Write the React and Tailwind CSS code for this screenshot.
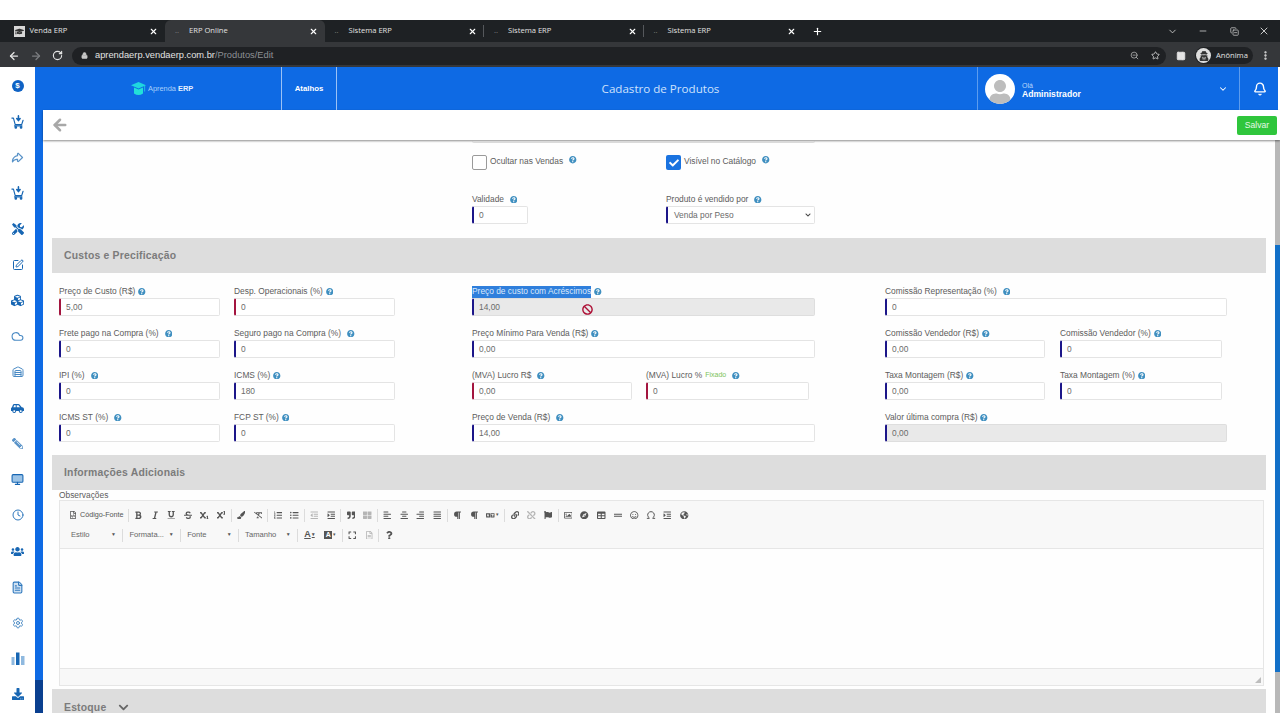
import React from "react"
import {
  ArrowLeft, ArrowRight, RotateCw, Lock, ZoomOut, Star, X, Plus, ChevronDown, Minus, EllipsisVertical,
  Cloud, Warehouse, Monitor, Clock, FileText, Settings, SquarePen, Bell, PanelRight, CopyMinus, Omega,
} from "lucide-react"
import {
  FaTools, FaCubes, FaCarSide, FaPencilAlt, FaUsers, FaDownload,
  FaGraduationCap, FaUserSecret, FaCheck, FaBan, FaUser, FaQuestionCircle, FaChevronDown,
  FaBold, FaItalic, FaUnderline, FaStrikethrough, FaSubscript, FaSuperscript, FaPaintBrush, FaRemoveFormat,
  FaListOl, FaListUl, FaOutdent, FaIndent, FaQuoteRight, FaAlignLeft, FaAlignCenter, FaAlignRight,
  FaAlignJustify, FaParagraph, FaLanguage, FaLink, FaUnlink, FaFlag, FaRegImage, FaCompass, FaTable,
  FaGripLines, FaRegSmile, FaGlobeAmericas, FaExpand, FaRegFileCode, FaRegFileAlt, FaQuestion, FaThLarge,
} from "react-icons/fa"
import { TiArrowForwardOutline } from "react-icons/ti"

const tabs = [
  { title: "Venda ERP", favicon: true },
  { title: "ERP Online", active: true },
  { title: "Sistema ERP", divider: true },
  { title: "Sistema ERP", divider: true },
  { title: "Sistema ERP" },
]

function CartIcon() {
  return (
    <svg width="14" height="14" viewBox="0 0 16 16" fill="none" stroke="currentColor" strokeWidth="1.3" strokeLinecap="round" strokeLinejoin="round">
      <path d="M1 3.5h1.8l2 7.5h7.4l1.6-5" />
      <path d="M4 12.5h8.5" />
      <circle cx="5.5" cy="14.2" r="0.9" fill="currentColor" />
      <circle cx="11.5" cy="14.2" r="0.9" fill="currentColor" />
      <path d="M8.5 1v4.5M6.6 4l1.9 2.4L10.4 4" strokeWidth="1.8" />
    </svg>
  )
}

function BarsIcon() {
  return (
    <svg width="14" height="13" viewBox="0 0 14 13">
      <rect x="0.5" y="5" width="3" height="8" fill="#8fb9df" />
      <rect x="5" y="0.5" width="3.5" height="12.5" fill="#1766b3" />
      <rect x="10" y="4" width="3.5" height="9" fill="#8fb9df" />
    </svg>
  )
}

function LogoIcon() {
  return (
    <svg width="15" height="15" viewBox="0 0 15 15">
      <path d="M7.5 1 15 4.2 7.5 7.5 0 4.2Z" fill="#1fd6df" />
      <path d="M3 6.5 7.5 8.5 12 6.5V12.5Q7.5 15.5 3 12.5Z" fill="#22e0d8" />
      <rect x="13.3" y="4.5" width="0.8" height="6" fill="#1fd6df" />
    </svg>
  )
}

const sideIcons = [
  <span key="s" className="flex h-[12px] w-[12px] items-center justify-center rounded-full bg-[#0f62c4] text-[8px] font-bold text-white">$</span>,
  <CartIcon key="a" />,
  <TiArrowForwardOutline key="b" size={15} className="text-[#5a93c8]" />,
  <CartIcon key="c" />,
  <FaTools key="d" size={12} />,
  <SquarePen key="e" size={12} />,
  <FaCubes key="f" size={13} />,
  <Cloud key="g" size={13} className="text-[#4a8ac4]" />,
  <Warehouse key="h" size={12} className="text-[#4a8ac4]" />,
  <FaCarSide key="i" size={13} />,
  <FaPencilAlt key="j" size={11} className="-scale-x-100 text-[#5a93c8]" />,
  <Monitor key="k" size={13} fill="#9cc3e6" />,
  <Clock key="l" size={12} className="text-[#2f78bd]" />,
  <FaUsers key="m" size={13} />,
  <FileText key="n" size={13} fill="#cfe1f2" className="text-[#2f78bd]" />,
  <Settings key="o" size={12} className="text-[#4a8ac4]" />,
  <BarsIcon key="p" />,
  <FaDownload key="q" size={12} />,
]

function Help({ wide }) {
  return <FaQuestionCircle size={7.5} className={`shrink-0 text-[#3f8fc0] ${wide ? "ml-[6px]" : "ml-[3px]"}`} />
}

function Field({ label, value, wide, tone = "blue", disabled, width = "w-full", note, selected }) {
  return (
    <div className={`flex flex-col ${width}`}>
      <div className="flex h-[14px] items-center pt-px text-[8.4px] text-[#5c5c5c]">
        <span className={selected ? "flex h-[12px] items-center bg-[#2f7fdc] text-[#dbe9fb]" : ""}>{label}</span>
        {note && <span className="ml-[3px] text-[7px] text-[#7cc35a]">{note}</span>}
        <Help wide={wide} />
      </div>
      <div
        className={`flex h-[18px] items-center rounded-[2px] border border-l-2 pl-[5px] text-[8.4px] text-[#6b6b6b] ${
          tone === "red" ? "border-l-[#a3153f]" : "border-l-[#1c1689]"
        } ${disabled ? "border-y-[#dedede] border-r-[#dedede] bg-[#e9e9e9]" : "border-y-[#e4e4e4] border-r-[#e4e4e4] bg-white"}`}
      >
        {value}
      </div>
    </div>
  )
}

function SectionBar({ title, height = "h-[35px]", children }) {
  return (
    <div className={`flex shrink-0 items-center bg-[#dddddd] pl-[12px] text-[10.4px] font-bold tracking-[0.2px] text-[#7b7b7b] ${height}`}>
      {title}
      {children}
    </div>
  )
}

const row1 = [
  { k: "sep" },
  ...[FaBold, FaItalic, FaUnderline, FaStrikethrough, FaSubscript, FaSuperscript].map((I) => ({ I })),
  { k: "sep" },
  ...[FaPaintBrush, FaRemoveFormat].map((I) => ({ I })),
  { k: "sep" },
  ...[FaListOl, FaListUl].map((I) => ({ I })),
  { k: "sep" },
  { I: FaOutdent, faint: true },
  { I: FaIndent },
  { k: "sep" },
  { I: FaQuoteRight },
  { I: FaThLarge, faint: true },
  { k: "sep" },
  ...[FaAlignLeft, FaAlignCenter, FaAlignRight, FaAlignJustify].map((I) => ({ I })),
  { k: "sep" },
  { I: FaParagraph },
  { I: FaParagraph },
  { I: FaLanguage, caret: true },
  { k: "sep" },
  { I: FaLink },
  { I: FaUnlink, faint: true },
  { I: FaFlag },
  { k: "sep" },
  ...[FaRegImage, FaCompass, FaTable, FaGripLines, FaRegSmile].map((I) => ({ I })),
  { L: Omega },
  { I: FaIndent },
  { I: FaGlobeAmericas },
]

function ToolIcon({ I, L, faint, caret }) {
  return (
    <span className={`flex h-[16px] items-center justify-center ${caret ? "w-[21.2px]" : "w-[16.6px]"} ${faint ? "text-[#b5b5b5]" : "text-[#555]"}`}>
      {I && <I size={8.5} />}
      {L && <L size={10} strokeWidth={2.4} />}
      {caret && <span className="ml-px text-[5px]">▾</span>}
    </span>
  )
}

function Sep() {
  return <span className="mx-[1.2px] h-[13px] w-px bg-[#dcdcdc]" />
}

function Combo({ label, width }) {
  return (
    <div className={`flex items-center justify-between pr-[5px] pl-[5px] text-[7.6px] text-[#666] ${width}`}>
      {label}
      <span className="text-[5px] text-[#555]">▼</span>
    </div>
  )
}

function Editor() {
  return (
    <div className="mr-[2px] ml-[7px] flex h-[186px] shrink-0 flex-col border border-[#e6e6e6]">
      <div className="flex h-[48px] shrink-0 flex-col border-b border-[#e6e6e6] bg-[#f8f8f8] pt-[6px]">
        <div className="flex h-[16px] items-center pl-[9px]">
          <span className="flex w-[57.6px] items-center text-[7.2px] text-[#555]">
            <FaRegFileCode size={8} className="mr-[3px] text-[#555]" />
            Código-Fonte
          </span>
          {row1.map((item, i) => (item.k ? <Sep key={i} /> : <ToolIcon key={i} {...item} />))}
        </div>
        <div className="mt-[4px] flex h-[16px] items-center pl-[6px]">
          <Combo label="Estilo" width="w-[55px]" />
          <Sep />
          <Combo label="Formata..." width="w-[54.4px]" />
          <Sep />
          <Combo label="Fonte" width="w-[54.6px]" />
          <Sep />
          <Combo label="Tamanho" width="w-[55.6px]" />
          <Sep />
          <span className="flex w-[20.8px] items-center justify-center text-[9px] font-bold text-[#555] underline">A<span className="ml-px text-[5px] no-underline">▾</span></span>
          <span className="flex w-[20.8px] items-center justify-center text-[#555]">
            <span className="flex h-[8px] w-[8px] items-center justify-center bg-[#555] text-[7px] font-bold text-white">A</span>
            <span className="ml-px text-[5px]">▾</span>
          </span>
          <Sep />
          <ToolIcon I={FaExpand} />
          <ToolIcon I={FaRegFileAlt} faint />
          <Sep />
          <ToolIcon I={FaQuestion} />
        </div>
      </div>
      <div className="flex-1 bg-[#fefefe]" />
      <div className="flex h-[17px] shrink-0 items-end justify-end border-t border-[#e6e6e6] bg-[#f8f8f8] p-[2px]">
        <span className="h-0 w-0 border-b-[6px] border-l-[6px] border-b-[#bdbdbd] border-l-transparent" />
      </div>
    </div>
  )
}

export default function App() {
  return (
    <div className="flex h-[720px] w-[1280px] flex-col overflow-hidden bg-white font-['Liberation_Sans',Arial,sans-serif]">
      <div className="h-[20px] shrink-0 bg-white" />

      {/* Browser tabs */}
      <div className="flex h-[22px] shrink-0 items-end bg-[#1e2124] pl-[5.5px] font-['Open_Sans',sans-serif] text-[7.6px] text-[#e2e2e2]">
        {tabs.map((tab, i) => (
          <div
            key={i}
            className={`flex h-[22px] w-[159.5px] items-center rounded-t-[6px] ${tab.active ? "bg-[#35373a]" : ""} ${tab.favicon ? "pl-[8px]" : "pl-[10px]"} ${tab.divider ? "pr-0" : "pr-[7px]"}`}
          >
            {tab.favicon ? (
              <span className="mr-[5px] flex h-[11px] w-[11px] items-center justify-center bg-[#d8d8d8] text-[#333]">
                <FaGraduationCap size={9} />
              </span>
            ) : (
              <span className="mr-[5px] w-[9px] text-[#888]">..</span>
            )}
            <span className="flex-1">{tab.title}</span>
            <X size={9} strokeWidth={3} className="text-white" />
            {tab.divider && <span className="ml-[6px] h-[12px] w-px bg-[#55585c]" />}
          </div>
        ))}
        <div className="flex h-[22px] w-[28px] items-center justify-center">
          <Plus size={11} strokeWidth={2.5} className="text-white" />
        </div>
        <div className="flex h-[22px] flex-1 items-center justify-end text-[#c8c8c8]">
          <ChevronDown size={11} className="mr-[20px]" />
          <Minus size={10} className="mr-[22px]" />
          <CopyMinus size={9} className="mr-[19px]" />
          <X size={12} className="mr-[10px]" />
        </div>
      </div>

      {/* Browser toolbar */}
      <div className="flex h-[25px] shrink-0 items-center bg-[#35373a] pt-[2px] pl-[8px] text-[#e4e4e4]">
        <ArrowLeft size={12} strokeWidth={2.5} />
        <ArrowRight size={12} strokeWidth={2.5} className="ml-[10px] text-[#7b7d80]" />
        <RotateCw size={11} strokeWidth={2.5} className="ml-[10px]" />
        <div className="ml-[9px] flex h-[18px] w-[1094px] items-center rounded-full bg-[#1f2124] pr-[5px] pl-[9px]">
          <Lock size={7} fill="#c8c8c8" className="text-[#c8c8c8]" />
          <span className="ml-[7px] flex-1 text-[9.3px] text-[#e2e2e2]">
            aprendaerp.vendaerp.com.br<span className="text-[#8d9094]">/Produtos/Edit</span>
          </span>
          <ZoomOut size={9} className="mr-[12px] text-[#b9b9b9]" />
          <Star size={9} className="mr-px" />
        </div>
        <PanelRight size={10} className="ml-[10px]" fill="#e4e4e4" />
        <div className="ml-[9px] flex h-[17px] w-[58px] items-center rounded-full bg-[#1f2124] font-['Open_Sans',sans-serif] text-[7.6px]">
          <span className="mr-[5px] ml-px flex h-[15px] w-[15px] items-center justify-center rounded-full bg-[#dedede] text-[#333]">
            <FaUserSecret size={10} />
          </span>
          Anônima
        </div>
        <EllipsisVertical size={11} strokeWidth={3} className="ml-[7px]" />
      </div>

      <div className="flex h-[646px] shrink-0">
        {/* Sidebar */}
        <div className="flex w-[35px] shrink-0 flex-col items-center pt-px text-[#1766b3]">
          {sideIcons.map((icon, i) => (
            <div key={i} className="flex h-[35.8px] w-full shrink-0 items-center justify-center">
              {icon}
            </div>
          ))}
        </div>

        <div className="flex w-[8px] shrink-0 flex-col">
          <div className="flex-1 bg-[#0e6ae4]" />
          <div className="h-[33px] bg-[#0a3f8f]" />
        </div>

        <div className="flex min-w-0 flex-1 flex-col">
          {/* App header */}
          <div className="flex h-[43px] shrink-0 bg-[#0e6ae4] text-white">
            <div className="flex w-[239px] items-center border-r border-[#9cc2f5] pl-[88px]">
              <LogoIcon />
              <span className="ml-[2px] text-[7.4px] text-[#a9d0fa]">Aprenda <b className="text-[#e8f1ff]">ERP</b></span>
            </div>
            <div className="flex w-[55px] items-center justify-center border-r border-[#9cc2f5] text-[7.8px] font-bold">Atalhos</div>
            <div className="flex flex-1 items-center justify-center pt-px pl-[7px] font-['Open_Sans',sans-serif] text-[11.6px] text-[#cfe2fc]">Cadastro de Produtos</div>
            <div className="flex w-[263px] items-center border-x border-[#5c9cee] pl-[7px]">
              <span className="flex h-[30px] w-[30px] items-end justify-center overflow-hidden rounded-full bg-white">
                <FaUser size={24} className="text-[#bdbdbd]" />
              </span>
              <div className="mt-[3px] ml-[7px] flex flex-1 flex-col">
                <span className="text-[7px] leading-[7px] text-[#bcd8fb]">Olá</span>
                <span className="text-[8.6px] leading-[10px] font-bold">Administrador</span>
              </div>
              <ChevronDown size={10} strokeWidth={2.5} className="mr-[11px]" />
            </div>
            <div className="flex w-[38px] items-center justify-center pl-px">
              <Bell size={14} strokeWidth={2.4} />
            </div>
            <div className="w-[2px] bg-white" />
          </div>

          {/* Page toolbar */}
          <div className="z-10 flex h-[30px] shrink-0 items-center justify-between bg-white pr-[3px] pl-[8px] shadow-[0_1px_2px_rgba(0,0,0,0.45)]">
            <ArrowLeft size={18} strokeWidth={3.4} className="text-[#a8a8a8]" />
            <button className="flex h-[19px] w-[40px] items-center justify-center rounded-[2px] bg-[#2fc63c] text-[8.6px] text-[#e6f8e7]">Salvar</button>
          </div>

          <div className="flex min-h-0 flex-1">
            <div className="relative min-w-0 flex-1 overflow-hidden bg-[#fefefe] px-[9px]">
              {/* Top of the form */}
              <div className="ml-[420px] h-[3px] w-[343px] rounded-b-[2px] border-b border-[#e2e2e2]" />
              <div className="mt-[12px] ml-[420px] flex h-[15px] text-[8.4px] text-[#5c5c5c]">
                <div className="flex w-[194px] items-start">
                  <span className="h-[15px] w-[15px] rounded-[2px] border border-[#9a9a9a] bg-white" />
                  <span className="ml-[3px]">Ocultar nas Vendas</span>
                  <span className="mt-px"><Help wide /></span>
                </div>
                <div className="flex items-start">
                  <span className="flex h-[15px] w-[15px] items-center justify-center rounded-[2px] bg-[#1a73e0] text-white">
                    <FaCheck size={10} />
                  </span>
                  <span className="ml-[3px]">Visível no Catálogo</span>
                  <span className="mt-px"><Help wide /></span>
                </div>
              </div>
              <div className="mt-[22px] ml-[420px] flex h-[32px]">
                <div className="w-[194px]">
                  <Field label="Validade" value="0" wide width="w-[56px]" />
                </div>
                <div className="flex w-[149px] flex-col">
                  <div className="flex h-[14px] items-center pt-px text-[8.4px] text-[#5c5c5c]">
                    Produto é vendido por
                    <Help wide />
                  </div>
                  <div className="flex h-[18px] items-center justify-between rounded-[2px] border border-y-[#e4e4e4] border-r-[#e4e4e4] border-l-2 border-l-[#1c1689] bg-white pr-[3px] pl-[6px] text-[8.4px] text-[#6b6b6b]">
                    Venda por Peso
                    <FaChevronDown size={6} className="text-[#444]" />
                  </div>
                </div>
              </div>

              <div className="mt-[14px]">
                <SectionBar title="Custos e Precificação" />
              </div>

              {/* Pricing fields */}
              <div className="mt-[11px] ml-[7px] flex">
                <div className="grid w-[336px] shrink-0 grid-cols-2 gap-x-[14px] gap-y-[10px]">
                  <Field label="Preço de Custo (R$)" value="5,00" tone="red" />
                  <Field label="Desp. Operacionais (%)" value="0" tone="red" />
                  <Field label="Frete pago na Compra (%)" value="0" wide />
                  <Field label="Seguro pago na Compra (%)" value="0" wide />
                  <Field label="IPI (%)" value="0" wide />
                  <Field label="ICMS (%)" value="180" />
                  <Field label="ICMS ST (%)" value="0" wide />
                  <Field label="FCP ST (%)" value="0" />
                </div>
                <div className="ml-[77px] flex w-[343px] shrink-0 flex-col gap-y-[10px]">
                  <Field label="Preço de custo com Acréscimos" value="14,00" disabled selected />
                  <Field label="Preço Mínimo Para Venda (R$)" value="0,00" />
                  <div className="flex">
                    <Field label="(MVA) Lucro R$" value="0,00" tone="red" wide width="w-[160px]" />
                    <Field label="(MVA) Lucro %" value="0" tone="red" wide note="Fixado" width="ml-[14px] w-[163px]" />
                  </div>
                  <Field label="Preço de Venda (R$)" value="14,00" wide />
                </div>
                <div className="ml-[70px] flex w-[342px] shrink-0 flex-col gap-y-[10px]">
                  <Field label="Comissão Representação (%)" value="0" wide />
                  <div className="flex">
                    <Field label="Comissão Vendedor (R$)" value="0,00" width="w-[160px]" />
                    <Field label="Comissão Vendedor (%)" value="0" width="ml-[15px] w-[162px]" />
                  </div>
                  <div className="flex">
                    <Field label="Taxa Montagem (R$)" value="0,00" width="w-[160px]" />
                    <Field label="Taxa Montagem (%)" value="0" width="ml-[15px] w-[162px]" />
                  </div>
                  <Field label="Valor última compra (R$)" value="0,00" disabled />
                </div>
              </div>

              <div className="mt-[13px]">
                <SectionBar title="Informações Adicionais" />
              </div>
              <div className="ml-[7px] flex h-[10px] items-center pt-px text-[8.4px] text-[#5c5c5c]">Observações</div>
              <Editor />
              <div className="mt-[3px]">
                <SectionBar title="Estoque" height="h-[36px] items-start pt-[11px]">
                  <FaChevronDown size={11} className="mt-[2px] ml-[12px] text-[#666]" />
                </SectionBar>
              </div>

              {/* Not-allowed cursor over the disabled field */}
              <FaBan size={11} className="absolute top-[164px] left-[539px] text-[#ad0f35]" />
            </div>

            {/* Page scrollbar */}
            <div className="flex w-[5px] shrink-0 flex-col">
              <div className="h-[105px] bg-[#b8b8b8]" />
              <div className="flex-1 bg-[#1270c8]" />
              <div className="h-[41px] bg-[#b8b8b8]" />
            </div>
          </div>
        </div>
      </div>
      <div className="h-[7px] shrink-0 bg-white" />
    </div>
  )
}
